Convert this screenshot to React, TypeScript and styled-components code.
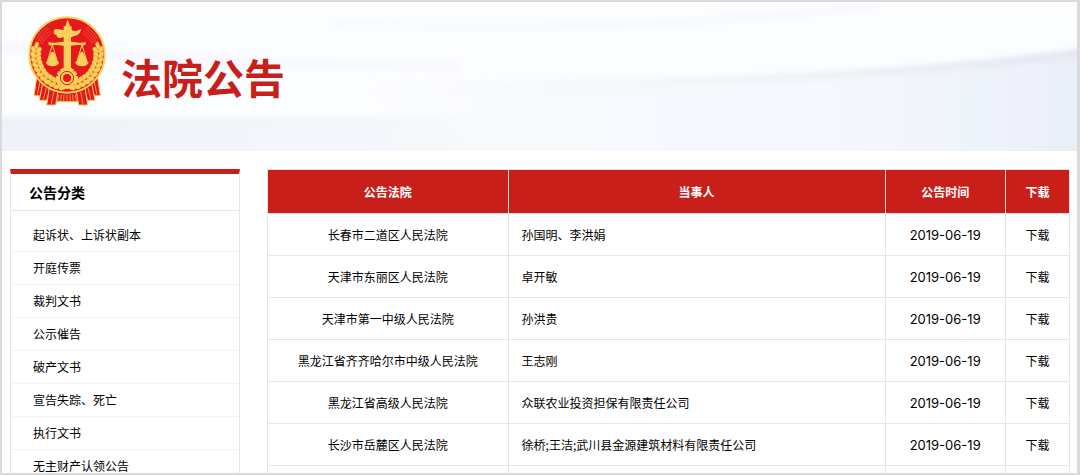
import React from "react";
import styled, { createGlobalStyle } from "styled-components";

const RED = "#c91f1b";
const LINE = "#e6e6e6";

const GlobalStyle = createGlobalStyle`
  *, *::before, *::after { box-sizing: border-box; }
  body {
    margin: 0;
    background: #fff;
    color: #000;
    font-family: "Noto Sans CJK SC", sans-serif;
    font-size: 12px;
    line-height: 18px;
  }
`;

const Page = styled.div`
  height: 100vh;
  overflow: hidden;
  border: 2px solid #dadada;
  border-width: 2px 3px 2px 2px;
  background: #fff;
`;

const Banner = styled.header`
  position: relative;
  height: 149px;
  padding: 14px 26px;
  display: flex;
  align-items: flex-start;
  gap: 14px;
  background: #fcfdff;
`;

const Waves = styled.svg`
  position: absolute;
  inset: 0;
  width: 100%;
  height: 100%;
`;

const EmblemArt = styled.svg`
  position: relative;
  flex: none;
  width: 79px;
  height: 90px;
`;

const SiteTitle = styled.h1`
  position: relative;
  margin: 0;
  padding-top: 30px;
  font-size: 41px;
  line-height: 60px;
  font-weight: 700;
  color: ${RED};
`;

const Content = styled.main`
  display: flex;
  align-items: flex-start;
  gap: 27px;
  padding: 18px 7px 0 8px;
`;

const Sidebar = styled.nav`
  flex: none;
  width: 230px;
  border: 1px solid ${LINE};
  border-top: 5px solid ${RED};
`;

const SidebarTitle = styled.h2`
  margin: 0;
  padding: 0 18px;
  font-size: 14px;
  line-height: 36px;
  font-weight: 700;
  border-bottom: 1px solid ${LINE};
`;

const CategoryList = styled.ul`
  margin: 0;
  padding: 8px 0 0;
  list-style: none;
`;

const CategoryItem = styled.li`
  border-bottom: 1px solid #f2f2f2;
`;

const CategoryLink = styled.a`
  display: block;
  padding: 0 22px;
  line-height: 32px;
  color: inherit;
  text-decoration: none;
`;

const NoticeTable = styled.table`
  flex: 1;
  min-width: 0;
  width: 100%;
  table-layout: fixed;
  border-collapse: collapse;
`;

const Column = styled.col<{ $share: number }>`
  width: ${(p) => p.$share}%;
`;

const HeadCell = styled.th`
  height: 44px;
  padding: 0;
  background: ${RED};
  color: #fff;
  font-weight: 700;
  border: 1px solid #eadada;
`;

const Cell = styled.td<{ $left?: boolean }>`
  height: 42px;
  padding: 0 13px;
  text-align: ${(p) => (p.$left ? "left" : "center")};
  border: 1px solid ${LINE};
`;

const DateCell = styled(Cell)`
  font-family: Inter, "Noto Sans CJK SC", sans-serif;
  font-size: 13px;
`;

const DownloadLink = styled.a`
  color: inherit;
  text-decoration: none;
`;

const categories = [
  "起诉状、上诉状副本",
  "开庭传票",
  "裁判文书",
  "公示催告",
  "破产文书",
  "宣告失踪、死亡",
  "执行文书",
  "无主财产认领公告",
];

const notices = [
  { court: "长春市二道区人民法院", party: "孙国明、李洪娟", date: "2019-06-19" },
  { court: "天津市东丽区人民法院", party: "卓开敏", date: "2019-06-19" },
  { court: "天津市第一中级人民法院", party: "孙洪贵", date: "2019-06-19" },
  { court: "黑龙江省齐齐哈尔市中级人民法院", party: "王志刚", date: "2019-06-19" },
  { court: "黑龙江省高级人民法院", party: "众联农业投资担保有限责任公司", date: "2019-06-19" },
  { court: "长沙市岳麓区人民法院", party: "徐桥;王洁;武川县金源建筑材料有限责任公司", date: "2019-06-19" },
];

function BannerWaves() {
  return (
    <Waves viewBox="0 0 1075 149" preserveAspectRatio="none" aria-hidden="true">
      <defs>
        <filter id="soft" x="-10%" y="-50%" width="120%" height="200%">
          <feGaussianBlur stdDeviation="3" />
        </filter>
        <linearGradient id="leftFold" x1="0" y1="0" x2="1" y2="0">
          <stop offset="0" stopColor="#eff2f9" />
          <stop offset="0.5" stopColor="#f5f7fc" />
          <stop offset="1" stopColor="#f8f9fd" stopOpacity="0" />
        </linearGradient>
        <linearGradient id="rightFold" x1="0" y1="0" x2="1" y2="0">
          <stop offset="0" stopColor="#f8f9fd" stopOpacity="0" />
          <stop offset="0.3" stopColor="#f7f9fd" />
          <stop offset="0.65" stopColor="#f6f8fd" />
          <stop offset="0.85" stopColor="#eff3fb" />
          <stop offset="1" stopColor="#e9eef8" />
        </linearGradient>
        <linearGradient id="crease" x1="0" y1="0" x2="1" y2="0">
          <stop offset="0" stopColor="#f2f5f9" stopOpacity="0" />
          <stop offset="0.5" stopColor="#eef3f7" />
          <stop offset="1" stopColor="#dadfea" />
        </linearGradient>
        <linearGradient id="fade" x1="0" y1="0" x2="1" y2="0">
          <stop offset="0" stopColor="#edf0f6" />
          <stop offset="0.7" stopColor="#eef3f7" />
          <stop offset="1" stopColor="#f8fafc" stopOpacity="0" />
        </linearGradient>
      </defs>
      <g filter="url(#soft)">
        <path d="M-10 40 C120 46 220 58 460 62 L460 68 C240 68 120 58 -10 50Z" fill="#f6f8fc" />
        <path d="M-10 114 C160 118 330 116 520 112 L760 165 L-10 165Z" fill="url(#leftFold)" />
        <path d="M-10 115 C160 117 330 117 520 112 L520 116 C330 122 160 121 -10 120Z" fill="url(#fade)" />
        <path d="M330 21 C520 27 700 22 880 0 L880 4 C720 27 520 31 330 24Z" fill="#f4f6fa" />
        <path d="M340 84 C620 84 900 76 1090 50 L1090 165 L520 165Z" fill="url(#rightFold)" />
      </g>
      <path d="M340 82 C620 84 900 76 1090 49" fill="none" stroke="url(#crease)" strokeWidth="6" filter="url(#soft)" />
    </Waves>
  );
}

const GOLD = "#f8d05a";
const GOLD_SHADE = "#df8f30";
const EMBLEM_RED = "#e5191d";

function WheatEar() {
  const rows = Array.from({ length: 11 }, (_, i) => 188 - i * 9);
  return (
    <g fill={GOLD} stroke={GOLD_SHADE} strokeWidth="1">
      {rows.map((deg) =>
        [86, 101].map((radius, side) => {
          const a = (deg * Math.PI) / 180;
          const x = Math.round(141 + radius * Math.cos(a));
          const y = Math.round(139 + radius * Math.sin(a));
          const turn = deg - 180 + (side ? -28 : 28);
          return (
            <ellipse
              key={`${deg}-${side}`}
              cx={x}
              cy={y}
              rx="7"
              ry="11"
              transform={`rotate(${turn} ${x} ${y})`}
            />
          );
        })
      )}
      <ellipse cx="50" cy="112" rx="6" ry="11" transform="rotate(12 50 112)" />
    </g>
  );
}

function HalfEmblem() {
  return (
    <g>
      <g stroke="#ee6a35" strokeWidth="2" fill="none">
        <path d="M50 94 C56 80 66 67 82 57" />
        <path d="M55 100 C60 86 70 74 86 62" />
        <path d="M60 104 C66 90 75 79 91 68" />
        <path d="M66 107 C72 95 80 85 94 74" />
      </g>
      <WheatEar />
      <path d="M97 110 L81 164 M97 110 L113 164" stroke={GOLD} strokeWidth="3" fill="none" />
      <path d="M94 132 L80 164 H115 L101 132Z" fill={GOLD} />
      <path d="M77 162 H118 Q114 175 98 175 Q81 175 77 162Z" fill={GOLD} />
    </g>
  );
}

function RibbonHalf() {
  return (
    <g fill={EMBLEM_RED} stroke={GOLD} strokeWidth="3" strokeLinejoin="round">
      <path d="M50 208 L42 263 H60 L72 230Z" />
      <path d="M68 226 L58 277 H80 L90 244Z" />
      <path d="M88 240 L80 291 H107 L114 250Z" />
      <path d="M60 222 L52 260 M79 240 L70 274 M101 252 L94 288" fill="none" strokeWidth="2" />
    </g>
  );
}

function Emblem() {
  const teeth = Array.from({ length: 12 }, (_, i) => i * 30);
  return (
    <EmblemArt viewBox="24 24 237 270" role="img" aria-label="法徽">
      <path d="M110 250 H173 L177 281 H106Z" fill={EMBLEM_RED} stroke={GOLD} strokeWidth="3" />
      <path
        d="M116 260 L113 280 M124 260 L122 280 M132 260 L131 280 M141 260 V280 M150 260 L151 280 M158 260 L160 280 M166 260 L169 280"
        stroke={GOLD}
        strokeWidth="2"
      />
      <RibbonHalf />
      <g transform="translate(283 0) scale(-1 1)">
        <RibbonHalf />
      </g>
      <circle cx="141" cy="141" r="113" fill={EMBLEM_RED} stroke={GOLD} strokeWidth="6" />
      <HalfEmblem />
      <g transform="translate(283 0) scale(-1 1)">
        <HalfEmblem />
      </g>
      <g fill={GOLD}>
        <path d="M137 50 L143 34 L149 50 V55 H155 V66 C166 72 173 68 183 63 C182 76 174 82 163 84 L153 88 V190 H131 V86 C124 92 110 92 110 82 C99 80 98 68 106 64 C114 61 122 66 131 66 V55 H137Z" />
        <path d="M86 102 C104 108 118 100 131 101 H153 C166 100 180 108 197 102 C200 110 194 113 188 112 C176 110 166 112 153 113 H131 C116 112 106 110 94 112 C88 113 83 110 86 102Z" />
      </g>
      <g fill={GOLD}>
        {teeth.map((t) => (
          <rect key={t} x="135" y="178" width="12" height="64" rx="2" transform={`rotate(${t} 141 210)`} />
        ))}
        <circle cx="141" cy="210" r="27" />
      </g>
      <circle cx="141" cy="210" r="20" fill="none" stroke={EMBLEM_RED} strokeWidth="3" />
      <circle cx="141" cy="210" r="12" fill={EMBLEM_RED} />
    </EmblemArt>
  );
}

export default function App() {
  return (
    <>
      <GlobalStyle />
      <Page>
        <Banner>
          <BannerWaves />
          <Emblem />
          <SiteTitle>法院公告</SiteTitle>
        </Banner>
        <Content>
          <Sidebar aria-label="公告分类">
            <SidebarTitle>公告分类</SidebarTitle>
            <CategoryList>
              {categories.map((name) => (
                <CategoryItem key={name}>
                  <CategoryLink href="#">{name}</CategoryLink>
                </CategoryItem>
              ))}
            </CategoryList>
          </Sidebar>
          <NoticeTable>
            <colgroup>
              <Column $share={30} />
              <Column $share={47} />
              <Column $share={15} />
              <Column $share={8} />
            </colgroup>
            <thead>
              <tr>
                <HeadCell scope="col">公告法院</HeadCell>
                <HeadCell scope="col">当事人</HeadCell>
                <HeadCell scope="col">公告时间</HeadCell>
                <HeadCell scope="col">下载</HeadCell>
              </tr>
            </thead>
            <tbody>
              {notices.map((n) => (
                <tr key={n.court}>
                  <Cell>{n.court}</Cell>
                  <Cell $left>{n.party}</Cell>
                  <DateCell>{n.date}</DateCell>
                  <Cell>
                    <DownloadLink href="#">下载</DownloadLink>
                  </Cell>
                </tr>
              ))}
              <tr>
                <Cell />
                <Cell />
                <Cell />
                <Cell />
              </tr>
            </tbody>
          </NoticeTable>
        </Content>
      </Page>
    </>
  );
}
